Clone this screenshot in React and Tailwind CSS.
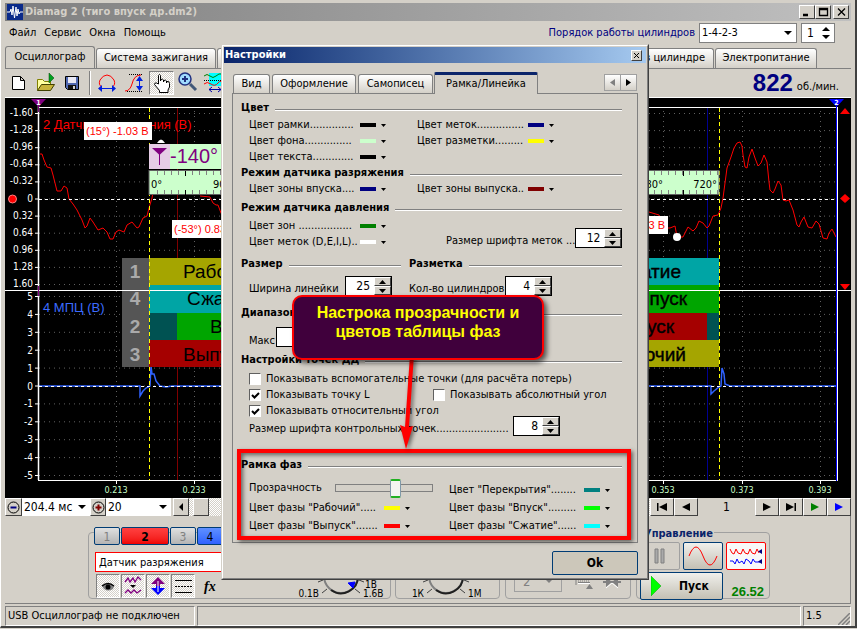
import { useId } from 'react'

// ─── Shared class strings ─────────────────────────────────────────────────────
const CHECKER = 'bg-[conic-gradient(#fff_25%,#d4d0c8_0_50%,#fff_0_75%,#d4d0c8_0)] bg-[length:2px_2px]'
const RAISED = 'border border-t-white border-l-white border-r-[#404040] border-b-[#404040] bg-[#d4d0c8]'
const SUNKEN = 'border border-t-[#808080] border-l-[#808080] border-r-white border-b-white'
const TAB = 'rounded-t-[3px] border border-b-0 border-[#808080] bg-linear-to-b from-white to-[#d4d0c8] whitespace-nowrap'

// ─── Chart data ───────────────────────────────────────────────────────────────
const UPPER_TICKS = ['-1.60', '-1.28', '-0.96', '-0.64', '-0.32', '0', '0.32', '0.64', '0.96', '1.28', '1.60']
const LOWER_TICKS = ['5', '4', '3', '2', '1', '0', '-1', '-2', '-3', '-4', '-5']
const TIME_TICKS = [
  { x: 116, label: '0.213' },
  { x: 194, label: '0.233' },
  { x: 272 },
  { x: 350 },
  { x: 429 },
  { x: 507 },
  { x: 585 },
  { x: 663, label: '0.353' },
  { x: 742, label: '0.373' },
  { x: 820, label: '0.393' },
]
const VACUUM_LEFT =
  '40,154 42,154 44,160 47,167 51,168 53,175 55,183 57,191 61,191 64,186 67,188 69,199 73,204 77,210 82,220 85,228 87,226 90,218 93,222 98,230 103,228 107,232 110,239 113,239 116,232 119,230 124,232 127,225 132,222 137,228 139,227 143,218 147,216 149,208 152,198 155,180'
const VACUUM_MID = '200,196 210,197 213,203 216,205 218,205 221,213 226,222'
const VACUUM_RIGHT =
  '640,205 649,212 659,215 664,228 670,228 675,226 677,237 683,237 688,227 693,231 696,228 699,221 703,223 707,228 709,226 713,216 718,215 721,208 723,198 725,183 727,168 731,157 734,148 737,143 740,142 742,146 743,155 745,167 747,168 749,157 752,149 755,158 758,166 761,163 764,155 767,162 769,182 770,190 773,193 775,189 778,181 781,185 783,200 786,201 789,200 793,210 797,225 799,227 801,222 804,217 808,227 812,228 816,221 819,224 823,238 827,239 829,233 832,229 836,237'
const SYNC =
  '39,386 140,386 140,396 143,391 146,388 150,386 151,366 152,374 154,374 156,381 160,386 166,387 172,386 711,386 711,394 714,391 719,387 721,386 722,368 724,374 725,384 730,386 836,386'

const RULER_TICKS = Array.from({ length: 81 }, (_, i) => 157 + i * 7)

// ─── Oscillogram ──────────────────────────────────────────────────────────────
function Chart() {
  return (
    <svg viewBox="5 97 846 401" className="block h-auto w-full bg-black font-['DejaVu_Sans_Condensed','DejaVu_Sans',sans-serif]">
      <g stroke="#606060" strokeDasharray="1 4">
        {UPPER_TICKS.map((t, i) => <line key={t} x1="39" x2="836" y1={113.5 + i * 17.1} y2={113.5 + i * 17.1} />)}
        {LOWER_TICKS.map((t, i) => <line key={t} x1="39" x2="836" y1={296.5 + i * 17.9} y2={296.5 + i * 17.9} />)}
        {TIME_TICKS.map((t) => <line key={t.x} x1={t.x + 0.5} x2={t.x + 0.5} y1="111" y2="480" />)}
      </g>

      <line x1="177.5" x2="177.5" y1="108" y2="480" stroke="#800000" />
      <line x1="707.5" x2="707.5" y1="108" y2="480" stroke="#000090" />
      <g className="font-['Liberation_Sans',sans-serif]" fontSize="13">
        <text x="43" y="129" fill="#f00">2 Датчик разряжения (В)</text>
        <text x="43" y="312" fill="#3c6cff">4 МПЦ (В)</text>
      </g>

      <g fill="none" stroke="#f00">
        <polyline points={VACUUM_LEFT} />
        <polyline points={VACUUM_MID} />
        <polyline points={VACUUM_RIGHT} />
      </g>
      <polyline points={SYNC} fill="none" stroke="#2f62ff" strokeWidth="1.5" />
      <g stroke="#fff" strokeDasharray="3 3">
        <line x1="39" x2="836" y1="199.5" y2="199.5" />
        <line x1="39" x2="836" y1="386.5" y2="386.5" />
      </g>

      {/* Phase table */}
      <rect x="122" y="258" width="27" height="109" fill="#555" />
      <rect x="149" y="258" width="101" height="27" fill="#a5a500" />
      <rect x="149" y="285" width="101" height="28" fill="#00a5a5" />
      <rect x="149" y="313" width="28" height="27" fill="#005252" />
      <rect x="177" y="313" width="73" height="27" fill="#00a500" />
      <rect x="149" y="340" width="101" height="27" fill="#a50000" />
      <rect x="620" y="258" width="99" height="27" fill="#00a5a5" />
      <rect x="620" y="285" width="99" height="28" fill="#00a500" />
      <rect x="620" y="313" width="87" height="27" fill="#a50000" />
      <rect x="707" y="313" width="12" height="27" fill="#005252" />
      <rect x="620" y="340" width="99" height="27" fill="#a5a500" />
      <g className="font-['Liberation_Sans',sans-serif]" fontSize="19">
        <g fill="#aaa" fontWeight="bold" textAnchor="middle">
          <text x="135" y="278">1</text>
          <text x="135" y="305">4</text>
          <text x="135" y="333">2</text>
          <text x="135" y="361">3</text>
        </g>
        <text x="183" y="278">Рабочий</text>
        <text x="187" y="305">Сжатие</text>
        <text x="210" y="333">Впуск</text>
        <text x="183" y="361">Выпуск</text>
        <g textAnchor="end" stroke="#000" strokeWidth="0.4">
          <text x="681" y="278">Сжатие</text>
          <text x="687" y="305">Впуск</text>
          <text x="674" y="333">Выпуск</text>
          <text x="686" y="361">Рабочий</text>
        </g>
      </g>

      {/* Axes */}
      <g stroke="#fff">
        <path d="M5 97.500H851M38 107.500H838M5 290.500H851M38 480.500H838" />
        <line x1="38.500" x2="38.500" y1="105" y2="480" strokeWidth="1.500" />
        {UPPER_TICKS.map((t, i) => <line key={t} x1="35" x2="39" y1={113.5 + i * 17.1} y2={113.5 + i * 17.1} />)}
        {LOWER_TICKS.map((t, i) => <line key={t} x1="35" x2="39" y1={296.5 + i * 17.9} y2={296.5 + i * 17.9} />)}
        {TIME_TICKS.map((t) => <line key={t.x} x1={t.x + 0.5} x2={t.x + 0.5} y1="481" y2="484" />)}
      </g>
      <g fill="#fff" fontSize="10" textAnchor="end">
        {UPPER_TICKS.map((t, i) => <text key={t} x="33" y={116 + i * 17.1}>{t}</text>)}
        {LOWER_TICKS.map((t, i) => <text key={t} x="33" y={300 + i * 17.9}>{t}</text>)}
      </g>
      <g fill="#c8ffc8" fontSize="9" textAnchor="middle">
        {TIME_TICKS.filter((t) => t.label).map((t) => <text key={t.x} x={t.x} y="493">{t.label}</text>)}
      </g>

      {/* Cursors */}
      <g stroke="#ff0" strokeDasharray="4 3">
        <line x1="149.500" x2="149.500" y1="108" y2="480" />
        <line x1="719.500" x2="719.500" y1="108" y2="480" />
      </g>
      <path d="M38.500 105V112M38.500 286V296" stroke="#800080" />
      <path d="M31 99H46L38.500 107Z" fill="#800080" />
      <text x="38.500" y="105" fontSize="7" fontWeight="bold" fill="#fff" textAnchor="middle">1</text>
      <line x1="836.500" x2="836.500" y1="105" y2="481" stroke="#00f" />
      <line x1="837.500" x2="837.500" y1="107" y2="481" stroke="#fff" />
      <path d="M829 99H844L836.500 107Z" fill="#00f" />
      <text x="836.500" y="105" fontSize="7" fontWeight="bold" fill="#fff" textAnchor="middle">2</text>
      <g fill="#f00">
        <path d="M845 108L850 114H840Z" />
        <path d="M845 194L850 198.500L845 203L840 198.500Z" />
        <path d="M840 284H850L845 290Z" />
        <circle cx="12.500" cy="199" r="4" stroke="#ff8080" />
      </g>

      {/* Angle readout and ruler */}
      <rect x="149" y="144" width="90" height="25" fill="#cfc" />
      <rect x="149" y="144" width="21" height="25" fill="#e6cde6" />
      <path d="M152 148H167L159.500 155Z" fill="#800080" />
      <path d="M159.500 154V165" stroke="#800080" />
      <text x="170" y="163" fontSize="20" fill="#800080" className="font-['Liberation_Sans',sans-serif]">-140°</text>
      <rect x="149" y="170.500" width="570" height="24" fill="#cfc" stroke="#606060" />
      <g stroke="#808080">
        {RULER_TICKS.map((x) => <path key={x} d={`M${x}.500 171V175M${x}.500 190V194`} />)}
      </g>
      <path d="M185.500 171V176M185.500 190V195M683.500 171V176M683.500 190V195" stroke="#000" />
      <g fontSize="11">
        <text x="151" y="188">0°</text>
        <text x="213" y="188">90°</text>
        <text x="663" y="188" textAnchor="end">680°</text>
        <text x="717" y="188" textAnchor="end">720°</text>
      </g>

      {/* Point labels */}
      <rect x="84" y="122" width="68" height="18" fill="#fff" />
      <rect x="172" y="220" width="76" height="18" fill="#fff" />
      <rect x="600" y="216" width="68" height="18" fill="#fff" />
      <g className="font-['Liberation_Sans',sans-serif]" fontSize="11" fill="#f00">
        <text x="86" y="135">(15°) -1.03 В</text>
        <text x="174" y="233">(-53°) 0.83 В</text>
        <text x="665" y="229" textAnchor="end">0.83 В</text>
      </g>
      <path d="M157 143Q161 136 165 143Z" fill="#fff" />
      <circle cx="677" cy="237" r="4" fill="#fff" />
    </svg>
  )
}

// ─── Toolbar icons ────────────────────────────────────────────────────────────
const TOOLS = [
  { name: 'Новый', box: 'w-7', art: <path d="M5.500 5.500H13.500L17.500 9.500V18.500H5.500ZM13.500 5.500V9.500H17.500" fill="#fff" stroke="#000" /> },
  {
    name: 'Открыть', box: 'w-7',
    art: (
      <>
        <path d="M2.500 19.500V8.500H7.500L9.500 10.500H15.500V13" fill="#ffffa0" stroke="#808000" />
        <path d="M2.500 19.500L6.500 13.500H19.500L15.500 19.500Z" fill="#c8b43c" stroke="#404000" />
        <path d="M14 2V12L19 7Z" fill="#00a020" stroke="#004000" strokeWidth=".5" />
      </>
    ),
  },
  {
    name: 'Сохранить', box: 'w-7',
    art: (
      <>
        <path d="M2.500 5.500H15.500V18.500H4.500L2.500 16.500Z" fill="#5068b0" stroke="#000" />
        <rect x="5" y="6" width="8" height="6" fill="#e8e8f4" />
        <rect x="5" y="14" width="8" height="4" fill="#101010" />
        <rect x="10" y="15" width="2" height="3" fill="#d0d0d0" />
      </>
    ),
  },
]
const MARKS = [
  {
    name: 'Период', box: 'w-7',
    art: (
      <>
        <path d="M7 16Q3 14 5 9Q8 4 12 4Q16 4 19 9Q21 14 17 16" fill="none" stroke="#f00" />
        <path d="M4 17.500H20" stroke="#0020e0" />
        <path d="M3 17.500L7 14V21ZM21 17.500L17 14V21Z" fill="#0020e0" />
      </>
    ),
  },
  {
    name: 'Амплитуда', box: 'w-7',
    art: (
      <>
        <path d="M6 3.500H20M4 20.500H20" stroke="#000" strokeDasharray="1 1" />
        <path d="M2 20Q7 20 9 13Q11 4 18 4" fill="none" stroke="#f00" />
        <path d="M16.500 6V19" stroke="#0020e0" />
        <path d="M16.500 5L13 10H20ZM16.500 20L13 15H20Z" fill="#0020e0" />
      </>
    ),
  },
  {
    name: 'Рука', box: 'w-[25px]', pressed: true,
    art: <path d="M8.500 13V4.500Q9.500 2.500 10.500 4.500V10L11 8.500Q12.500 7.500 13.500 9V11L14 9.500Q15.500 8.500 16.500 10V12L17 10.500Q19.500 10 19.500 12.500V16L18 19V21.500H9.500V19.500L4.500 13.500Q4.500 11.500 6.500 12Z" fill="#fff" stroke="#000" />,
  },
  {
    name: 'Лупа', box: 'w-7',
    art: (
      <>
        <path d="M14 13L20 19" stroke="#405878" strokeWidth="3" />
        <circle cx="9" cy="8" r="6" fill="#a0dcff" stroke="#203080" strokeWidth="1.500" />
        <path d="M6 8H12M9 5V11" stroke="#203080" strokeWidth="2" />
      </>
    ),
  },
  {
    name: 'Зона', box: 'w-6',
    art: (
      <>
        <rect x="7" y="2" width="12" height="13" fill="#00ffff" />
        <path d="M2 5Q5 2 8 5T14 5T20 3" fill="none" stroke="#008000" />
        <path d="M2 9.500H22" stroke="#000" strokeDasharray="1 1" />
        <path d="M2 13Q5 10 9 13T16 12T22 13" fill="none" stroke="#f00" />
        <path d="M7 18.500H19M10 16L7 18.500L10 21M16 16L19 18.500L16 21" fill="none" stroke="#00a" />
      </>
    ),
  },
]

function ToolButton({ tool }) {
  return (
    <button
      type="button"
      aria-label={tool.name}
      className={`flex h-6 items-center justify-center ${tool.box} ${tool.pressed ? `${CHECKER} ${SUNKEN}` : ''}`}
    >
      <svg className="size-6 shrink-0" viewBox="0 0 24 24">{tool.art}</svg>
    </button>
  )
}

function Arrow({ className = '' }) {
  return (
    <svg className={`h-[3px] w-[5px] shrink-0 ${className}`} viewBox="0 0 5 3" aria-hidden="true">
      <path d="M0 0H5L2.500 3Z" fill="currentColor" />
    </svg>
  )
}

// ─── Combo box drawn over a native select ─────────────────────────────────────
function Combo({ value, label, id, className }) {
  return (
    <div className={`flex items-center bg-white pr-1 ${className}`}>
      <select id={id} aria-label={label} defaultValue={value} className="w-0 min-w-0 flex-1 appearance-none bg-transparent pl-[2px] outline-none">
        <option>{value}</option>
      </select>
      <svg className="h-1 w-2 shrink-0" viewBox="0 0 8 4"><path d="M0 0H8L4 4Z" /></svg>
    </div>
  )
}

// ─── Main window parts ────────────────────────────────────────────────────────
function TitleBar() {
  return (
    <header className="flex h-[18px] items-center bg-linear-to-r from-[#808080] to-[#c0c0c0] px-[2px]">
      <svg className="size-4" viewBox="0 0 16 16">
        <rect width="16" height="16" fill="#0a2a8a" />
        <path d="M0 8H3L4 5L5 11L6 2L7.500 14L9 3L10 12L11 5L12 10L13 8H16" fill="none" stroke="#fff" />
      </svg>
      <h1 className="flex-1 pl-[2px] text-[11px] font-bold text-[#d4d0c8]">Diamag 2 (тиго впуск др.dm2)</h1>
      {[
        { name: 'Свернуть', d: 'M3 9.500H8M3 8.500H8' },
        { name: 'Развернуть', d: 'M3.500 2.500H11.500V9.500H3.500ZM3 3.500H12' },
        { name: 'Закрыть', d: 'M4 2.500L11 9.500M11 2.500L4 9.500' },
      ].map((b, i) => (
        <button key={b.name} type="button" aria-label={b.name} className={`h-[14px] w-4 ${RAISED} ${i === 2 ? 'ml-[2px]' : ''}`}>
          <svg className="h-3 w-[14px]" viewBox="0 0 14 12"><path d={b.d} fill="none" stroke="#000" strokeWidth="1.300" /></svg>
        </button>
      ))}
    </header>
  )
}

function MenuRow() {
  return (
    <div className="flex h-6 items-center pr-4 pl-1 text-[11px]">
      <nav className="flex flex-1 gap-2">
        {['Файл', 'Сервис', 'Окна', 'Помощь'].map((m) => <button key={m} type="button">{m}</button>)}
      </nav>
      <label htmlFor="order" className="pr-1 text-[#000080]">Порядок работы цилиндров</label>
      <Combo id="order" value="1-4-2-3" className="h-5 w-[98px] border border-[#808080] text-[11px]" />
      <div className="ml-1 flex h-5 w-[34px] items-center border border-[#808080] bg-white pr-1">
        <input aria-label="Цилиндр" defaultValue="1" className="w-0 flex-1 pl-[5px] text-[12px] outline-none" />
        <svg className="h-3 w-2" viewBox="0 0 8 12"><path d="M0 4H8L4 0ZM0 8H8L4 12Z" /></svg>
      </div>
    </div>
  )
}

function ScrollRow() {
  return (
    <div className="flex h-[18px] text-[12px]">
      <button type="button" aria-label="Сжать" className={`flex w-[17px] items-center justify-center ${RAISED}`}>
        <svg className="size-[13px]" viewBox="0 0 13 13"><circle cx="6.500" cy="6.500" r="5.500" fill="none" stroke="#000" /><path d="M3.500 6.500H9.500" stroke="#000080" strokeWidth="2" /></svg>
      </button>
      <Combo value="204.4 мс" label="Развёртка" className="w-[68px]" />
      <button type="button" aria-label="Растянуть" className={`flex w-4 items-center justify-center ${RAISED}`}>
        <svg className="size-[13px]" viewBox="0 0 13 13"><circle cx="6.500" cy="6.500" r="5.500" fill="none" stroke="#000" /><path d="M3.500 6.500H9.500M6.500 3.500V9.500" stroke="#800000" strokeWidth="2" /></svg>
      </button>
      <Combo value="20" label="Масштаб" className="w-[65px]" />
      <button type="button" aria-label="Влево" className={`ml-[2px] flex w-4 items-center justify-center ${RAISED}`}>
        <svg className="size-2" viewBox="0 0 8 8"><path d="M6 0V8L2 4Z" /></svg>
      </button>
      <div className={`flex flex-1 pl-1 ${CHECKER}`}><div className={`w-4 ${RAISED}`} /></div>
      {[
        { name: 'В начало', d: 'M1 1H2.500V9H1ZM11 1V9L3 5Z', fill: '#000' },
        { name: 'Назад', d: 'M10 1V9L2 5Z', fill: '#000' },
      ].map((b) => <NavButton key={b.name} {...b} />)}
      <output className="w-[57px] text-center leading-[18px]">1</output>
      {[
        { name: 'Вперёд', d: 'M2 1V9L10 5Z', fill: '#000' },
        { name: 'В конец', d: 'M1 1V9L9 5ZM9.500 1H11V9H9.500Z', fill: '#000' },
        { name: 'Воспроизвести', d: 'M2 1V9L10 5Z', fill: '#008000' },
        { name: 'Воспроизвести всё', d: 'M2 1V9L10 5Z', fill: '#00f' },
      ].map((b) => <NavButton key={b.name} {...b} />)}
    </div>
  )
}

function NavButton({ name, d, fill }) {
  return (
    <button type="button" aria-label={name} className={`flex w-6 items-center justify-center ${RAISED}`}>
      <svg className="h-[10px] w-3" viewBox="0 0 12 10"><path d={d} fill={fill} /></svg>
    </button>
  )
}

const CHANNELS = [
  { n: 1, cls: 'w-[26px] bg-linear-to-b from-[#e0e0e0] to-[#b4b4b4] text-[#808080]' },
  { n: 2, cls: 'w-12 bg-linear-to-b from-[#ff4040] to-[#f00000] font-bold' },
  { n: 3, cls: 'w-[26px] bg-linear-to-b from-[#e0e0e0] to-[#b4b4b4] text-[#808080]' },
  { n: 4, cls: 'w-[26px] bg-linear-to-b from-[#6090ff] to-[#3060ff]' },
]

const CHANNEL_TOOLS = [
  { name: 'Показать', art: <><path d="M5 11Q11 6 17 11L16 14Q11 17 7 14Z" fill="#808080" /><path d="M5 11Q11 6 17 11" fill="none" stroke="#000" strokeWidth="1.500" /><circle cx="11" cy="12" r="2.500" /></> },
  { name: 'Сглаживание', art: <><path d="M3 7L6 3L8 7L11 3L13 7L16 2L19 5M3 18L6 15L9 18L12 15L15 18L19 15" fill="none" stroke="#800080" strokeWidth="1.300" /><path d="M8 10H14L11 13Z" /></> },
  { name: 'Инверсия', art: <><path d="M11 2L18 9H13V11H9V9H4Z" fill="#800080" /><path d="M11 20L18 13H13V11H9V13H4Z" fill="#00f" /><path d="M11 6V17" stroke="#fff" /></> },
  { name: 'Уровни', art: <path d="M3 5.500H20M3 17.500H20M3 11.500H5M6 11.500H8M9 11.500H11M12 11.500H14M15 11.500H17M18 11.500H20" stroke="#000" /> },
]

function Knob({ kind }) {
  const volts = kind === 'volts'
  return (
    <svg className="h-[66px] w-[94px]" viewBox="0 0 94 66" fontSize="10">
      <circle cx="45" cy="43" r="17" fill="#d4d0c8" stroke="#808080" strokeWidth="2" />
      <path d="M62 43A17 17 0 0 1 35 57" fill="none" stroke="#202020" strokeWidth="2" />
      <path d="M31 56L26 60M59 56L64 60M27 47L22 49M63 47L68 49" stroke="#404040" />
      {volts && <path d="M59 49L52 50L57 55Z" fill="#00f" stroke="#00f" />}
      <text x="23" y="64" textAnchor="end">{volts ? '0.1В' : '1К'}</text>
      {volts && <text x="69" y="55">1В</text>}
      <text x="67" y="64">{volts ? '1.6В' : '1М'}</text>
    </svg>
  )
}

function ControlPanel() {
  return (
    <div className="flex h-[88px] border-r border-b border-[#808080] pr-[80px] pb-1 pl-[83px] text-[11px]">
      {/* Channel settings */}
      <section className="mt-4 flex flex-1 justify-between rounded border border-[#a0a0a0]">
        <div className="-mt-[6px] w-[136px] shrink-0 pl-[5px]">
          <div className="flex gap-px">
            {CHANNELS.map((c) => (
              <button key={c.n} type="button" className={`h-[18px] rounded-xs border border-[#003c74] text-[12px] ${c.cls}`}>{c.n}</button>
            ))}
          </div>
          <input aria-label="Датчик" defaultValue="Датчик разряжения" className="mt-[7px] ml-px h-5 w-full border border-[#f00] bg-white px-[3px] text-[11px] outline-none" />
          <div className="mt-[2px] ml-[2px] flex gap-px">
            {CHANNEL_TOOLS.map((t) => (
              <button key={t.name} type="button" aria-label={t.name} className={`flex size-6 items-center justify-center ${CHECKER} ${SUNKEN}`}>
                <svg className="size-[22px]" viewBox="0 0 22 22">{t.art}</svg>
              </button>
            ))}
            <button type="button" className="ml-2 font-['Liberation_Serif',serif] text-[14px] font-bold italic">fx</button>
          </div>
        </div>
        <Knob kind="volts" />
      </section>
      <section className="mt-4 ml-1 flex w-[105px] justify-center rounded border border-[#a0a0a0]">
        <Knob kind="ohms" />
      </section>
      <section className="mt-4 ml-[5px] flex w-[126px] items-end gap-3 rounded border border-[#a0a0a0] pb-[6px] pl-2 text-[#808080]">
        <div className="flex h-6 w-12 items-end justify-between border border-[#a0a0a0] px-2 text-[13px] leading-[18px]">
          2
          <svg className="mb-2 h-1 w-2" viewBox="0 0 8 4"><path d="M0 0H8L4 4Z" fill="#808080" /></svg>
        </div>
        <svg className="h-4 w-12" viewBox="0 0 48 16">
          <path d="M2 3.500V9M2 3.500H5M4 6.500H16" stroke="#808080" fill="none" />
          <path d="M4 5H16" stroke="#808080" strokeDasharray="1 1" />
          <path d="M4 7.500H16" stroke="#fff" />
          <path d="M12 13H19L15.500 8Z" fill="#808080" />
          <path d="M29 6H47" stroke="#808080" strokeWidth="2" />
          <path d="M32 1L38 6L32 11ZM44 1L38 6L44 11Z" fill="#808080" />
          <path d="M32 12L38 7L44 12" stroke="#fff" fill="none" />
        </svg>
      </section>

      {/* Run controls */}
      <section className="mt-4 ml-[5px] w-[134px] rounded border border-[#a0a0a0] px-[3px]">
        <h2 className="-mt-[7px] ml-1 w-fit bg-[#d4d0c8] pr-px text-[11px] leading-4 font-bold text-[#0a246a]">Управление</h2>
        <div className="flex gap-[3px]">
          <button type="button" aria-label="Пауза" className="flex h-7 w-10 items-center justify-center rounded-xs border border-[#a0a0a0]">
            <svg className="h-4 w-3" viewBox="0 0 12 16"><path d="M1 1H4V15H1ZM7 1H10V15H7Z" fill="#aaa" stroke="#808080" /></svg>
          </button>
          <button type="button" aria-label="Синус" className="h-7 w-10 rounded-xs border border-[#003c74] bg-linear-to-b from-[#f0f0ec] to-[#c4c0b4]">
            <svg className="h-[26px] w-[38px]" viewBox="0 0 38 26"><path d="M5 13Q12 -5 19 13T33 13" fill="none" stroke="#f00" /></svg>
          </button>
          <button type="button" aria-label="Поток" className="h-7 w-10 rounded-xs border border-[#f00] bg-[#f8f8f8]">
            <svg className="h-[26px] w-[38px]" viewBox="0 0 38 26">
              <path d="M3 6L5 10L7 11L9 6L11 10L14 11L16 6L18 10L21 11L23 6L25 10L28 11L30 6L32 10" fill="none" stroke="#f00" />
              <path d="M3 18H6L8 21L10 16L12 20L15 18L17 21L19 16L22 18L24 21L26 16L28 19H33" fill="none" stroke="#00f" />
              <path d="M35 6V11L31 8.500ZM35 16V21L31 18.500Z" fill="#000080" />
            </svg>
          </button>
        </div>
        <div className="mt-[2px] flex items-end justify-between">
          <button type="button" className="flex h-7 w-[83px] items-center rounded-xs border border-[#003c74] bg-linear-to-b from-[#f0f0ec] to-[#c4c0b4] pl-[10px] text-[12px] font-bold">
            <svg className="mr-[18px] h-5 w-[10px]" viewBox="0 0 10 20"><path d="M0 0V20L10 10Z" fill="#0f0" stroke="#00a000" strokeWidth=".5" /></svg>
            Пуск
          </button>
          <output className="pr-[2px] font-['Liberation_Sans',sans-serif] text-[13px] leading-4 font-bold text-[#008000]">26.52</output>
        </div>
      </section>
    </div>
  )
}

function StatusBar() {
  return (
    <footer className="mt-[2px] flex h-5 gap-[2px] text-[11px] leading-[18px]">
      <span className={`w-[190px] pl-[2px] whitespace-nowrap ${SUNKEN}`}>USB Осциллограф не подключен</span>
      <span className={`flex-1 ${SUNKEN}`} />
      <span className={`flex w-12 items-end justify-between pl-[2px] ${SUNKEN}`}>
        1.5
        <svg className="size-3" viewBox="0 0 12 12"><path d="M0 12L12 0M4 12L12 4M8 12L12 8" stroke="#808080" strokeWidth="1.500" /></svg>
      </span>
    </footer>
  )
}

// ─── Dialog building blocks ───────────────────────────────────────────────────
function Heading({ children, className = '' }) {
  return (
    <h3 className={`flex h-4 items-center gap-[6px] pl-2 text-[11px] font-bold whitespace-nowrap ${className}`}>
      {children}
      <span className="mt-[3px] h-[2px] flex-1 border-t border-[#808080] bg-white" />
    </h3>
  )
}

// Label ends in a dotted leader that runs up to the swatch drop-down
function ColorField({ label, swatch, className = 'w-[137px]' }) {
  const id = useId()
  return (
    <div className={`flex h-4 items-center justify-between whitespace-nowrap ${className}`}>
      <label htmlFor={id}>{label}</label>
      <button id={id} type="button" className="flex items-center gap-[5px]">
        <span className={`h-1 w-4 ${swatch}`} />
        <Arrow />
      </button>
    </div>
  )
}

function NumberField({ label, value, className = '' }) {
  const id = useId()
  return (
    <div className={`flex h-5 items-center justify-between whitespace-nowrap ${className}`}>
      <label htmlFor={id} className="mt-[6px]">{label}</label>
      <div className="flex h-5 w-[47px] shrink-0 border border-black bg-white">
        <input id={id} defaultValue={value} className="w-0 flex-1 pr-1 text-right text-[12px] outline-none" />
        <div className="flex w-[17px] flex-col">
          <button type="button" aria-label="Больше" className={`flex flex-1 items-center justify-center ${RAISED}`}>
            <svg className="h-1 w-[7px]" viewBox="0 0 7 4"><path d="M0 4H7L3.500 0Z" /></svg>
          </button>
          <button type="button" aria-label="Меньше" className={`flex flex-1 items-center justify-center ${RAISED}`}>
            <svg className="h-1 w-[7px]" viewBox="0 0 7 4"><path d="M0 0H7L3.500 4Z" /></svg>
          </button>
        </div>
      </div>
    </div>
  )
}

function Check({ label, checked = false, className = '' }) {
  return (
    <label className={`flex h-4 items-center gap-[5px] whitespace-nowrap ${className}`}>
      <span className="grid size-3 place-items-center border border-t-[#606060] border-r-white border-b-white border-l-[#606060] bg-white">
        <input type="checkbox" defaultChecked={checked} className="peer col-start-1 row-start-1 size-[10px] appearance-none" />
        <svg className="pointer-events-none invisible col-start-1 row-start-1 size-[9px] peer-checked:visible" viewBox="0 0 9 9">
          <path d="M1 4L3.500 6.500L8 2" fill="none" stroke="#000" strokeWidth="2" />
        </svg>
      </span>
      {label}
    </label>
  )
}

// ─── Settings dialog ──────────────────────────────────────────────────────────
function SettingsDialog() {
  return (
    <div role="dialog" aria-label="Настройки" className="absolute top-[44px] left-[221px] w-[428px] border border-t-[#d4d0c8] border-r-[#404040] border-b-[#404040] border-l-[#d4d0c8] bg-[#d4d0c8] text-[11px] leading-4">
      <div className="border border-t-white border-r-[#808080] border-b-[#808080] border-l-white px-px pt-px pb-[3px]">
        <div className="flex h-4 items-center justify-between bg-linear-to-r from-[#0a246a] to-[#a6caf0] pr-1 pl-px">
          <h2 className="font-bold text-white">Настройки</h2>
          <button type="button" aria-label="Закрыть" className={`flex size-[11px] items-center justify-center ${RAISED}`}>
            <svg className="size-[7px]" viewBox="0 0 7 7"><path d="M1 1L6 6M6 1L1 6" stroke="#000" /></svg>
          </button>
        </div>

        <div className="px-2 pt-[9px]">
          <div role="tablist" className="flex items-end gap-[2px] pl-px">
            <button role="tab" type="button" className={`h-[19px] w-[37px] ${TAB}`}>Вид</button>
            <button role="tab" type="button" className={`h-[19px] w-[84px] ${TAB}`}>Оформление</button>
            <button role="tab" type="button" className={`h-[19px] w-[75px] ${TAB}`}>Самописец</button>
            <button role="tab" type="button" aria-selected="true" className="-mb-px -ml-px h-[22px] w-[104px] rounded-t-xs border border-t-[3px] border-b-0 border-[#808080] border-t-[#0a246a] bg-[#d4d0c8] pb-px">
              Рамка/Линейка
            </button>
            <div className="mr-px mb-[2px] ml-auto flex">
              <button type="button" aria-label="Назад" className="flex h-[17px] w-[17px] items-center justify-center border border-[#a0a0a0] bg-linear-to-b from-white to-[#d4d0c8]">
                <svg className="h-[7px] w-[5px]" viewBox="0 0 5 7"><path d="M5 0V7L0 3.500Z" fill="#808080" /></svg>
              </button>
              <button type="button" aria-label="Вперёд" className="-ml-px flex h-[17px] w-[17px] items-center justify-center border border-[#a0a0a0] bg-linear-to-b from-white to-[#d4d0c8]">
                <svg className="h-[7px] w-[5px]" viewBox="0 0 5 7"><path d="M0 0V7L5 3.500Z" /></svg>
              </button>
            </div>
          </div>

          <div className="h-[450px] border border-[#808080] pt-[6px] pr-[15px]">
            <Heading className="mb-px">Цвет</Heading>
            <div className="grid grid-cols-[168px_1fr] pl-4">
              <ColorField label="Цвет рамки.............." swatch="bg-black" />
              <ColorField label="Цвет меток..............." swatch="bg-[#000080]" />
              <ColorField label="Цвет фона..............." swatch="bg-[#ccffcc]" />
              <ColorField label="Цвет разметки........." swatch="bg-[#ffff00]" />
              <ColorField label="Цвет текста............." swatch="bg-black" />
            </div>

            <Heading>Режим датчика разряжения</Heading>
            <div className="grid grid-cols-[168px_1fr] pl-4">
              <ColorField label="Цвет зоны впуска...." swatch="bg-[#000080]" />
              <ColorField label="Цвет зоны выпуска.." swatch="bg-[#800000]" />
            </div>

            <Heading className="mt-[3px] mb-[2px]">Режим датчика давления</Heading>
            <div className="flex items-end justify-between pl-4">
              <div>
                <ColorField label="Цвет зон ................." swatch="bg-[#008000]" />
                <ColorField label="Цвет меток (D,E,I,L).." swatch="bg-white" />
              </div>
              <NumberField label="Размер шрифта меток ..." value="12" className="mb-[2px] w-[176px]" />
            </div>

            <div className="mt-[6px] grid grid-cols-[168px_1fr]">
              <div>
                <Heading>Размер</Heading>
                <NumberField label="Ширина линейки" value="25" className="mt-1 ml-4 w-[143px]" />
              </div>
              <div>
                <Heading>Разметка</Heading>
                <NumberField label="Кол-во цилиндров" value="4" className="mt-1 ml-2 w-[143px]" />
              </div>
            </div>

            <Heading className="mt-[9px]">Диапазон</Heading>
            <div className="mt-[6px] flex h-5 items-center gap-px pl-4">
              <label htmlFor="max" className="pt-2">Макс</label>
              <input id="max" className="h-5 w-12 border border-black bg-white" />
            </div>

            <Heading className="mt-[5px] mb-[3px]">Настройки точек ДД</Heading>
            <div className="pl-4">
              <Check label="Показывать вспомогательные точки (для расчёта потерь)" />
              <div className="flex">
                <Check label="Показывать точку L" checked className="w-[184px]" />
                <Check label="Показывать абсолютный угол" />
              </div>
              <Check label="Показывать относительный угол" checked />
            </div>
            <NumberField label="Размер шрифта контрольных точек......................." value="8" className="-mt-[3px] ml-4 w-[311px]" />

            <Heading className="mt-[21px] mb-[5px]">Рамка фаз</Heading>
            <div className="grid grid-cols-[200px_1fr] gap-y-[2px] pl-4">
              <div className="flex h-5 items-center">
                <label htmlFor="opacity" className="w-[86px]">Прозрачность</label>
                <input
                  id="opacity"
                  type="range"
                  defaultValue="63"
                  className="h-5 w-[98px] appearance-none bg-transparent [&::-webkit-slider-runnable-track]:h-2 [&::-webkit-slider-runnable-track]:border [&::-webkit-slider-runnable-track]:border-[#808080] [&::-webkit-slider-thumb]:-mt-[6px] [&::-webkit-slider-thumb]:h-[19px] [&::-webkit-slider-thumb]:w-[11px] [&::-webkit-slider-thumb]:appearance-none [&::-webkit-slider-thumb]:rounded-xs [&::-webkit-slider-thumb]:border [&::-webkit-slider-thumb]:border-y-2 [&::-webkit-slider-thumb]:border-x-[#8098a8] [&::-webkit-slider-thumb]:border-y-[#20b020] [&::-webkit-slider-thumb]:bg-[#f4f4f0]"
                />
              </div>
              <ColorField label={'Цвет "Перекрытия"........'} swatch="bg-[#008080]" className="mt-1 w-[161px]" />
              <ColorField label={'Цвет фазы "Рабочий".....'} swatch="bg-[#ffff00]" className="w-[161px]" />
              <ColorField label={'Цвет фазы "Впуск".........'} swatch="bg-[#00ff00]" className="w-[161px]" />
              <ColorField label={'Цвет фазы "Выпуск".......'} swatch="bg-[#ff0000]" className="w-[161px]" />
              <ColorField label={'Цвет фазы "Сжатие"......'} swatch="bg-[#00ffff]" className="w-[161px]" />
            </div>
          </div>

          <button type="button" className="mt-2 ml-auto block h-6 w-[86px] rounded-xs border border-[#003c74] bg-[#ccc7ba] text-[12px] font-bold">
            Ok
          </button>
        </div>
      </div>

      <Callout />
    </div>
  )
}

// Annotation lying over the dialog: bubble, arrow and highlighted section
function Callout() {
  return (
    <>
      <div className="absolute top-[404px] left-[15px] h-[91px] w-[394px] border-4 border-[#ff0000] shadow-[2px_2px_4px_#0008,inset_2px_2px_4px_#0008]" />
      <svg className="absolute top-[310px] left-[170px] h-[96px] w-[32px] drop-shadow-[2px_2px_2px_#0008]" viewBox="0 0 32 96">
        <path d="M18 0H22L17 72L21 71L14 94L8 70L13 72Z" fill="#f00" />
      </svg>
      <p className="absolute top-[250px] left-[70px] h-[65px] w-[252px] rounded-[10px] border-2 border-[#ff0000] bg-[#40003c] pt-[6px] text-center font-['Liberation_Sans',sans-serif] text-[16px] leading-[19px] font-bold text-[#ffff00] shadow-[3px_3px_5px_#0009]">
        Настрока прозрачности и<br />цветов таблицы фаз
      </p>
    </>
  )
}

// ─── Main export ──────────────────────────────────────────────────────────────
export default function App() {
  return (
    <div className="relative min-h-screen overflow-hidden bg-[#d4d0c8] font-['DejaVu_Sans_Condensed','DejaVu_Sans',sans-serif] text-black">
      <div className="border-r-2 border-b-2 border-l border-r-[#404040] border-b-[#404040] border-l-white pt-[3px] pr-1 pl-1">
        <TitleBar />
        <MenuRow />

        <div role="tablist" className="flex h-[23px] items-end gap-px text-[11px]">
          <button role="tab" type="button" aria-selected="true" className="h-[22px] w-[90px] rounded-t-[3px] border border-b-0 border-[#808080]">Осциллограф</button>
          <button role="tab" type="button" className={`h-5 w-[120px] ${TAB}`}>Система зажигания</button>
          <button role="tab" type="button" className={`h-5 flex-1 pr-2 text-right ${TAB}`}>Давление в цилиндре</button>
          <button role="tab" type="button" className={`mr-[34px] h-5 w-[102px] ${TAB}`}>Электропитание</button>
        </div>

        <div className="flex h-[29px] items-center border-t border-[#808080] pr-3">
          {TOOLS.map((t) => <ToolButton key={t.name} tool={t} />)}
          <span className="mr-[2px] h-6 w-[2px] border-l border-[#808080] bg-white" />
          {MARKS.map((t) => <ToolButton key={t.name} tool={t} />)}
          <output className="ml-auto font-['Liberation_Sans',sans-serif] text-[24px] leading-7 font-bold text-[#000080]">822</output>
          <span className="pt-2 pl-1 text-[11px]">об./мин.</span>
        </div>

        <Chart />
        <ScrollRow />
        <ControlPanel />
        <StatusBar />
      </div>
      <SettingsDialog />
    </div>
  )
}
